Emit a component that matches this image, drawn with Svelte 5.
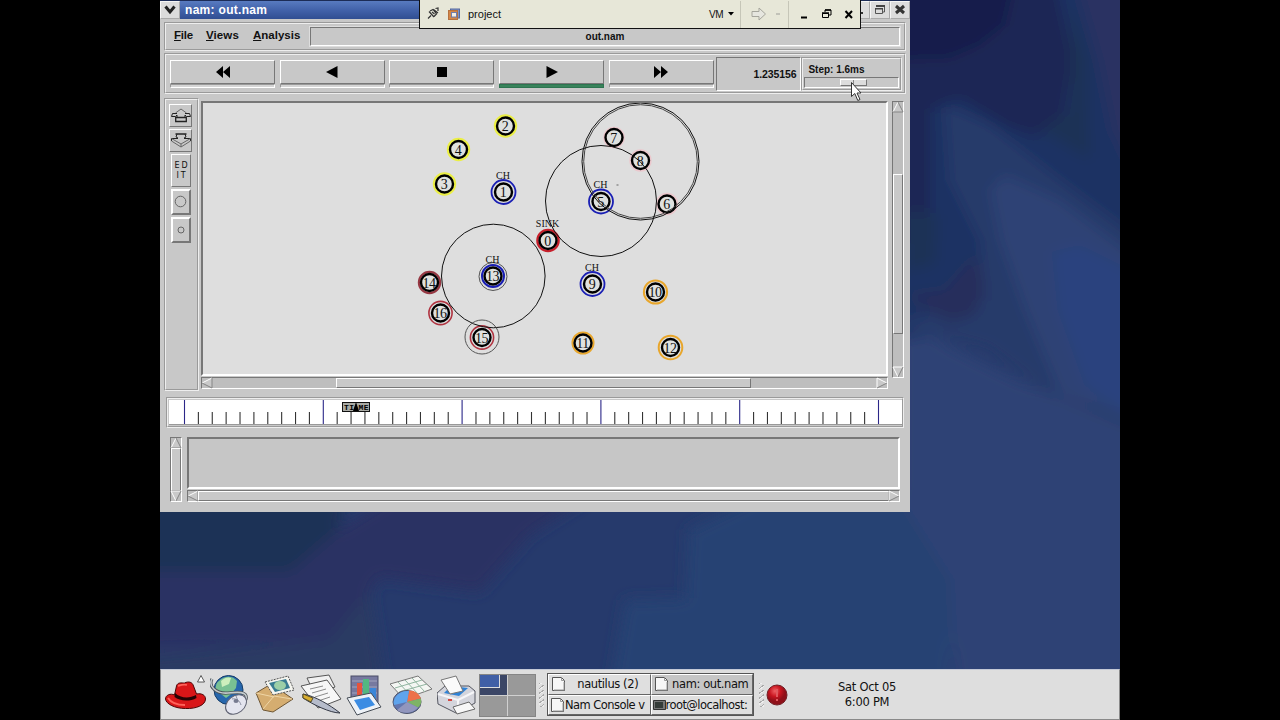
<script lang="ts">
  interface SimNode {
    id: number;
    x: number;
    y: number;
    color: string;
    ring: number;
    width: number;
    label?: string;
  }

  // canvas coordinates are desktop pixels
  const nodes: SimNode[] = [
    { id: 2, x: 505.5, y: 126, color: '#ebef45', ring: 10.5, width: 2.4 },
    { id: 4, x: 458.5, y: 149.5, color: '#ebef45', ring: 10.5, width: 2.4 },
    { id: 3, x: 444.5, y: 184, color: '#ebef45', ring: 10.5, width: 2.4 },
    { id: 1, x: 503.5, y: 192, color: '#1a1fb4', ring: 12, width: 1.8, label: 'CH' },
    { id: 5, x: 601, y: 201.5, color: '#1a1fb4', ring: 12, width: 1.8, label: 'CH' },
    { id: 7, x: 614, y: 137.5, color: '#ebc8cd', ring: 9.8, width: 2 },
    { id: 8, x: 640.5, y: 160.5, color: '#ebc8cd', ring: 10.2, width: 2 },
    { id: 6, x: 667, y: 204, color: '#ebc8cd', ring: 10.2, width: 2 },
    { id: 0, x: 548, y: 240.5, color: '#c7202c', ring: 10.6, width: 2.4 , label: 'SINK' },
    { id: 13, x: 493, y: 276, color: '#1a1fb4', ring: 11, width: 2, label: 'CH' },
    { id: 9, x: 592.5, y: 284, color: '#1a1fb4', ring: 12, width: 1.8, label: 'CH' },
    { id: 14, x: 429.5, y: 282.5, color: '#963843', ring: 10.6, width: 2.2 },
    { id: 16, x: 440.5, y: 313, color: '#b03340', ring: 11.6, width: 1.6 },
    { id: 15, x: 482, y: 337.5, color: '#b03340', ring: 11.6, width: 1.6 },
    { id: 10, x: 655.5, y: 292, color: '#e8a62b', ring: 11.6, width: 2 },
    { id: 11, x: 583, y: 343, color: '#e8a62b', ring: 10.5, width: 2 },
    { id: 12, x: 670.5, y: 347.5, color: '#e8a62b', ring: 11.8, width: 2 }
  ];

  const waves = [
    { x: 640.5, y: 161.5, r: 58.5, color: '#111' },
    { x: 640.5, y: 161.5, r: 56.8, color: '#444' },
    { x: 601, y: 201, r: 55.5, color: '#111' },
    { x: 493.3, y: 276, r: 51.8, color: '#111' },
    { x: 493, y: 276.5, r: 14, color: '#555' },
    { x: 482, y: 337, r: 17, color: '#555' }
  ];

  const controls = [
    { name: 'rewind', path: 'M7 0v12L0 6zM14 0v12L7 6z', running: false },
    { name: 'backward', path: 'M12.500 0v12L1 6z', running: false },
    { name: 'stop', path: 'M2 1h10v10H2z', running: false },
    { name: 'play', path: 'M1.500 0v12L13 6z', running: true },
    { name: 'forward', path: 'M0 0v12L7 6zM7 0v12L14 6z', running: false }
  ];

  const ticks = Array.from({ length: 51 }, (_, i) => ({
    x: 15.5 + i * 13.88,
    major: i % 10 === 0
  }));

  const tasks = [
    { title: 'nautilus (2)', icon: 'page', active: false },
    { title: 'nam: out.nam', icon: 'page', active: true },
    { title: 'Nam Console v', icon: 'page', active: false },
    { title: 'root@localhost:', icon: 'term', active: false }
  ];

  // wallpaper patches, painted back to front
  const patches = [
    { fill: '#1e3056', points: '140,490 350,490 335,540 290,575 140,590' },
    { fill: '#2a3263', points: '140,572 290,572 345,525 400,490 600,490 530,535 480,592 380,578 340,640 140,650' },
    { fill: '#293a63', points: '140,655 330,640 370,590 385,690 140,690' },
    { fill: '#254273', points: '610,690 625,600 685,598 688,530 770,490 960,490 950,690' },
    { fill: '#2f4274', points: '900,320 1040,390 1140,420 1140,690 955,690 950,580 900,500' },
    { fill: '#1c3263', points: '890,-20 1140,-20 1140,260 1040,190 990,180 990,330 890,340' },
    { fill: '#1c2655', points: '890,-20 1055,-20 1072,60 1062,122 1035,136 1005,126 960,98 930,110 930,230 890,250' },
    { fill: '#141f4b', points: '890,-20 1015,-20 1005,25 980,45 950,58 890,60' },
    { fill: '#2a3062', points: '1075,-20 1140,-20 1140,190 1112,130 1098,60' },
    { fill: '#1f3157', points: '1040,130 1070,110 1070,0 1088,60 1090,160' },
    { fill: '#273a6b', points: '945,105 990,125 1060,180 1140,240 1140,430 1040,390 985,350 890,325 985,300 980,240 950,180' },
    { fill: '#282e5c', points: '905,295 945,290 975,255 985,285 975,315 950,322' },
    { fill: '#1e3156', points: '905,210 938,215 935,265 905,272' },
    { fill: '#2d4275', points: '990,190 1005,175 1060,200 1140,260 1140,420 1060,395 1025,310 1000,240' },
    { fill: '#2c437e', points: '1052,252 1080,245 1140,275 1140,425 1085,385 1058,310' }
  ];
</script>

{#snippet arrow(dir: string)}
  <svg class="arrow" width="12" height="12" viewBox="0 0 12 12">
    {#if dir === 'up'}
      <path d="M6 1L11 11H1z" fill="#c9c9c9" />
      <path d="M1 11L6 1" stroke="#fff" /><path d="M6 1l5 10H1" fill="none" stroke="#858585" />
    {:else if dir === 'down'}
      <path d="M1 1h10L6 11z" fill="#c9c9c9" />
      <path d="M11 1H1l5 10" fill="none" stroke="#fff" /><path d="M6 11l5-10" stroke="#858585" />
    {:else if dir === 'left'}
      <path d="M11 1v10L1 6z" fill="#c9c9c9" />
      <path d="M11 1L1 6" stroke="#fff" /><path d="M1 6l10 5V1" fill="none" stroke="#858585" />
    {:else}
      <path d="M1 1v10l10-5z" fill="#c9c9c9" />
      <path d="M1 11V1l10 5" fill="none" stroke="#fff" /><path d="M1 11l10-5" stroke="#858585" />
    {/if}
  </svg>
{/snippet}

<div class="screen">
  <div class="desktop">
    <svg class="wallpaper" width="960" height="720" viewBox="160 0 960 720">
      <defs><filter id="soft" x="-20%" y="-20%" width="140%" height="140%"><feGaussianBlur stdDeviation="7" /></filter></defs>
      <g filter="url(#soft)">
        {#each patches as p}
          <polygon points={p.points} fill={p.fill} />
        {/each}
      </g>
    </svg>

    <main class="window">
      <header class="titlebar">
        <span class="wm-menu">
          <svg width="12" height="10" viewBox="0 0 12 10"><path d="M1.500 1.500L6 7l4.500-5.500" fill="none" stroke="#222" stroke-width="3" /></svg>
        </span>
        <span class="title">nam: out.nam</span>
        <span class="wm-button">
          <svg width="12" height="12" viewBox="0 0 12 12"><path d="M1 8h8v2H1z" fill="#333" /></svg>
        </span>
        <span class="wm-button">
          <svg width="12" height="12" viewBox="0 0 12 12"><path d="M2.500 2h8v6h-2M1.500 4.500h7v5h-7z" fill="none" stroke="#555" /><path d="M2 1h9v2H2zM1 4h8v1.500H1z" fill="#444" /></svg>
        </span>
        <span class="wm-button">
          <svg width="12" height="12" viewBox="0 0 12 12"><path d="M2 2l8 7M10 2L2 9" stroke="#333" stroke-width="3" /></svg>
        </span>
      </header>

      <nav class="menubar">
        <span class="menu file"><u>F</u>ile</span>
        <span class="menu views"><u>V</u>iews</span>
        <span class="menu analysis"><u>A</u>nalysis</span>
        <span class="filename">out.nam</span>
      </nav>

      <section class="controls">
        {#each controls as c (c.name)}
          <div class="control" class:running={c.running}>
            <button type="button" aria-label={c.name}>
              <svg width="14" height="12" viewBox="0 0 14 12"><path d={c.path} /></svg>
            </button>
            <i></i>
          </div>
        {/each}
        <div class="clock">1.235156</div>
        <div class="step">
          <span>Step: 1.6ms</span>
          <div class="slider"><b></b></div>
        </div>
      </section>

      <section class="workspace">
        <aside class="tools">
          <span class="tool arrows">
            <svg width="20" height="15" viewBox="0 0 20 15" fill="none" stroke="#222">
              <path d="M4.500 5L10 1l5.500 4" stroke="#666" />
              <path d="M6 5.500H1.500L.500 8.500h4L6 7v2M14 5.500h4.500l1 3h-4L14 7v2" />
              <path d="M4.700 9.500h10.600v4H4.700z" stroke-width="1.300" />
            </svg>
          </span>
          <span class="tool arrows">
            <svg width="20" height="15" viewBox="0 0 20 15" fill="none" stroke="#222">
              <path d="M4.500 1h11" stroke-width="1.500" />
              <path d="M6 1l-1 3 2 1M14 1l1 3-2 1M7 5.500H.500V8M13 5.500h6.500V8" />
              <path d="M.500 8L10 14l9.500-6M.500 5.500L10 11l9.500-5.500M10 11v3" stroke="#666" />
            </svg>
          </span>
          <span class="tool edit">ED<br />IT</span>
          <span class="tool zoom"><svg width="14" height="14" viewBox="0 0 14 14"><circle cx="6.500" cy="6.500" r="5.300" fill="none" stroke="#666" /></svg></span>
          <span class="tool zoom"><svg width="14" height="14" viewBox="0 0 14 14"><circle cx="7" cy="7" r="3" fill="none" stroke="#666" /></svg></span>
        </aside>

        <div class="view">
          <div class="canvas">
            <svg width="683" height="271" viewBox="203 103 683 271">
              {#each nodes as n (n.id)}
                <circle cx={n.x} cy={n.y} r={n.ring} fill="none" stroke={n.color} stroke-width={n.width} />
                <circle cx={n.x} cy={n.y} r="8.500" fill="#dfe1df" stroke="#000" stroke-width="2.400" />
              {/each}
              {#each waves as w}
                <circle cx={w.x} cy={w.y} r={w.r} fill="none" stroke={w.color} stroke-width="1" />
              {/each}
              {#each nodes as n (n.id)}
                <text class="id" x={n.x - 0.5} y={n.y + 5}>{n.id}</text>
                {#if n.label}
                  <text class="tag" x={n.x - 0.5} y={n.y - 13.5}>{n.label}</text>
                {/if}
              {/each}
              <path d="M616.500 185h2" stroke="#666" />
            </svg>
          </div>
          <div class="hscroll">
            {@render arrow('left')}
            <div class="trough"><b class="view-thumb"></b></div>
            {@render arrow('right')}
          </div>
        </div>

        <div class="vscroll view-v">
          {@render arrow('up')}
          <div class="trough"><b></b></div>
          {@render arrow('down')}
        </div>
      </section>

      <section class="timeline">
        <svg width="733" height="25" viewBox="0 0 733 25">
          {#each ticks as t}
            <path d="M{t.x} {t.major ? 0 : 12}V24" stroke={t.major ? '#2b2788' : '#333'} stroke-width="1.100" />
          {/each}
          <path d="M0 24.500h733" stroke="#999" />
          <rect x="173.500" y="2.500" width="27" height="9" fill="#a9aaa4" stroke="#111" />
          <text class="time" x="175" y="10" textLength="10">TI</text>
          <text class="time" x="189.500" y="10" textLength="10">ME</text>
          <path d="M187 2l3 9h-6z" fill="#000" />
        </svg>
      </section>

      <section class="annotations">
        <div class="vscroll">
          {@render arrow('up')}
          <div class="trough"><b></b></div>
          {@render arrow('down')}
        </div>
        <div class="notes">
          <div class="listbox"></div>
          <div class="hscroll">
            {@render arrow('left')}
            <div class="trough"><b></b></div>
            {@render arrow('right')}
          </div>
        </div>
      </section>
    </main>

    <div class="vmbar">
      <svg class="pin" width="14" height="14" viewBox="0 0 14 14" fill="none" stroke="#333">
        <path d="M2 11.500l3-3M3 4.500l5 5.500M4 4l3-1.500L10.500 7 8 9.500M7.500 2.500L12 6M6 5l2.500 2M9.500 1.500L12 1v3" stroke-width="1.200" />
      </svg>
      <svg class="vmlogo" width="14" height="13" viewBox="0 0 14 13">
        <rect x="3.500" y="1" width="9" height="9" fill="#7d94c8" stroke="#56699e" />
        <rect x="1.500" y="2.500" width="9" height="9" fill="#d58645" stroke="#b5713f" />
        <rect x="4.500" y="4.500" width="5" height="4.500" fill="#f5f0e5" stroke="#6d7db0" />
      </svg>
      <span class="vmname">project</span>
      <span class="vmmenu">VM</span>
      <svg class="caret" width="6" height="4" viewBox="0 0 6 4"><path d="M0 0h6L3 3.500z" /></svg>
      <span class="sep"></span>
      <svg class="go" width="16" height="14" viewBox="0 0 16 14"><path d="M1 4.500h7V1l6.500 6L8 13V9.500H1z" fill="#e6e6df" stroke="#a5a59c" /></svg>
      <span class="dot"></span>
      <span class="sep second"></span>
      <svg class="vmwin" width="56" height="12" viewBox="0 0 56 12">
        <path d="M1 9.500h6" stroke="#000" stroke-width="2" />
        <path d="M25 4V2h6v5h-2M22.500 5.500h6v4h-6z" fill="none" stroke="#000" />
        <path d="M25 2h6M22 5h7" stroke="#000" stroke-width="1.500" />
        <path d="M45.500 3l6.500 7M52 3l-6.500 7" stroke="#000" stroke-width="2" />
      </svg>
    </div>

    <svg class="pointer" width="12" height="20" viewBox="0 0 12 20"><path d="M.500.500v14l3.300-3 3 7 2.200-1-3-6.500H10z" fill="#fff" stroke="#333" /></svg>

    <footer class="panel">
      <div class="launchers">
        <svg class="hat" width="48" height="44" viewBox="0 0 48 44">
          <path d="M4.500 26c0-4 5-6 9-4l2-9c1-4 5-3 8-3 4-2 8-1 9 3l3 8c5-1 9 1 9 5 0 6-9 10-20 9.500C14 35.500 5 31 4.500 26z" fill="#d91618" stroke="#4c0708" />
          <path d="M14 20c5 5 14 6 21 2l.500 3c-7 4-17 3-22-1z" fill="#260405" />
          <path d="M17 13c3-1 5-2 9-1M7 25c3 5 10 7 17 7" fill="none" stroke="#ff6259" stroke-width="1.800" />
          <path d="M36.500 9h7L40 2.500z" fill="#fff" stroke="#333" stroke-width=".800" />
        </svg>
        <svg class="globe" width="44" height="44" viewBox="0 0 44 44">
          <circle cx="18.500" cy="17" r="14.500" fill="#2767ad" stroke="#173d67" />
          <path d="M9 8c6-6 14-5 18 0l-1 7-6 7-4 3-5-4-5-2c-1-5 0-9 3-11z" fill="#79c193" />
          <path d="M11 8c4-4 8-4 10-3l-2 6-7 3z" fill="#cdefbd" />
          <path d="M2 6c-4 7 4 15 16 14 9-1 20-2 18 6-1 3-3 4-5 4" fill="none" stroke="#4c5358" stroke-width="3.200" />
          <path d="M2 6c-4 7 4 15 16 14 9-1 20-2 18 6-1 3-3 4-5 4" fill="none" stroke="#c4cbce" stroke-width="1.600" />
          <ellipse cx="26" cy="31.500" rx="11.500" ry="8.500" transform="rotate(-38 26 31.500)" fill="#e4e5ef" stroke="#606373" />
          <path d="M22 26c4-1 8 2 9 6M26 23l2 5" fill="none" stroke="#8b8fa1" />
          <ellipse cx="26" cy="28" rx="2.500" ry="2" fill="#777b90" />
        </svg>
        <svg class="mail" width="44" height="44" viewBox="0 0 44 44">
          <path d="M1 20l15-9 22 15-20 13-10-2z" fill="#d5ad70" stroke="#6f5735" />
          <path d="M8 36l11-13 18 3M1 20l18 4" fill="none" stroke="#efd6a6" />
          <path d="M10 9l23-6 6 14-21 5z" fill="#f5f5ef" stroke="#555" stroke-dasharray="2 1" />
          <path d="M14 10l17-4 4 9-15 4z" fill="#397b91" />
          <ellipse cx="25" cy="12.500" rx="6" ry="4.500" fill="#9ccfa7" />
        </svg>
        <svg class="writer" width="44" height="44" viewBox="0 0 44 44">
          <path d="M7 5l22-3 6 12-20 8z" fill="#f1f1f1" stroke="#555" />
          <path d="M1 13l26-6 14 19-23 9z" fill="#f7f7f7" stroke="#555" />
          <path d="M10 16l13-3M12 20l14-4M15 24l13-4M18 28l12-4" stroke="#8c8c8c" />
          <path d="M3 21c12 2 27 11 37 19-10 0-28-9-37-15z" fill="#b6bccb" stroke="#333845" />
          <path d="M3 21l10 4-2 4-8-4z" fill="#d8ae30" stroke="#554a24" />
        </svg>
        <svg class="impress" width="44" height="44" viewBox="0 0 44 44">
          <rect x="6" y="3" width="27" height="26" fill="#77799f" stroke="#4b4d67" />
          <path d="M7 8h25M7 14h25M7 20h25" stroke="#a3a4bd" />
          <path d="M12 10h5v13h-5z" fill="#e7533b" /><path d="M18 6h6v18h-6z" fill="#52b781" /><path d="M25 15h6v12h-6z" fill="#3b86d8" />
          <path d="M2 25l24-5 10 14-24 8z" fill="#eef2f7" stroke="#454c55" />
          <path d="M9 27l15-3 6 8-15 5z" fill="#3b8ce3" />
        </svg>
        <svg class="calc" width="46" height="44" viewBox="0 0 46 44">
          <path d="M0 11l28-8 14 13-28 10z" fill="#f4f6f3" stroke="#777" />
          <path d="M5 15l27-8M9 19l28-8M8 9l13 14M15 7l13 14M22 5l13 14" stroke="#91b5a0" />
          <ellipse cx="17" cy="29" rx="14" ry="11.500" fill="#6376af" stroke="#4d5266" />
          <path d="M17 29L19 17.500c6 0 10 3 12 8z" fill="#ec7149" /><path d="M17 29l14-3.500c1 5-1 7-3 9z" fill="#7eb366" />
          <path d="M17 29l11 5.500C23 41 12 41 7 37z" fill="#9296bd" />
          <path d="M17 29L19 18C8 17 2 26 4 32z" fill="#5fa4ec" />
        </svg>
        <svg class="printer" width="42" height="44" viewBox="0 0 42 44">
          <path d="M0 20l8-7h24l6 5v12l-19 10L1 31z" fill="#d4d5dc" stroke="#555761" />
          <path d="M7 20l7-7 17 2-9 8z" fill="#2f83d7" />
          <path d="M4 7l15-4 7 15-13 3z" fill="#fafafa" stroke="#777" />
          <path d="M1 21l20 6v11M21 27l16-8" fill="none" stroke="#f6f6f8" stroke-width="2" />
          <path d="M16 34l16-5 6 7-18 5z" fill="#f7f7f7" stroke="#666" /><path d="M11 27h4" stroke="#d54942" stroke-width="2" />
        </svg>
      </div>
      <div class="pager"><span class="current"><b></b></span><span></span><span></span><span></span></div>
      <div class="grip"></div>
      <div class="tasks">
        {#each tasks as task (task.title)}
          <div class="task" class:active={task.active} class:tight={task.title.length > 12}>
            {#if task.icon === 'page'}
              <svg width="15" height="16" viewBox="0 0 15 16"><path d="M1.500 1.500h9l3 3v10h-12z" fill="#f7f7f7" stroke="#555" /><path d="M10.500 1.500v3h3M3 14h10V6" fill="none" stroke="#999" /></svg>
            {:else}
              <svg width="13" height="16" viewBox="0 0 13 16"><path d="M.500 3.500h12v9H.500z" fill="#777" stroke="#333" /><path d="M2 5h8v6H2z" fill="#353b38" /></svg>
            {/if}
            <span>{task.title}</span>
          </div>
        {/each}
      </div>
      <div class="grip last"></div>
      <svg class="alert" width="22" height="22" viewBox="0 0 22 22">
        <defs><radialGradient id="ball" cx=".4" cy=".3"><stop offset="0" stop-color="#ef6063" /><stop offset=".55" stop-color="#c91620" /><stop offset="1" stop-color="#8f1019" /></radialGradient></defs>
        <circle cx="11" cy="11" r="10" fill="url(#ball)" stroke="#722026" />
        <path d="M11 5v8M11 15v2" stroke="#e0585d" stroke-width="2" />
      </svg>
      <div class="date">Sat Oct 05<br />6:00 PM</div>
    </footer>
  </div>
</div>

<style>
  :global(body) {
    margin: 0;
    background: #000;
  }
  .screen {
    width: 1280px;
    height: 720px;
    display: flex;
    justify-content: center;
    overflow: hidden;
    background: #000;
    font-family: 'Liberation Sans', Arial, sans-serif;
    color: #111;
  }
  .screen * {
    box-sizing: border-box;
  }
  svg {
    display: block;
    flex: none;
  }
  .desktop {
    position: relative;
    width: 960px;
    height: 720px;
    display: flex;
    flex-direction: column;
    justify-content: space-between;
    align-items: flex-start;
    background: #263a6c;
    isolation: isolate;
  }
  .wallpaper {
    position: absolute;
    inset: 0;
    z-index: -1;
  }
  .window {
    width: 750px;
    height: 512px;
    background: #c8c8c8;
    display: flex;
    flex-direction: column;
  }
  .titlebar {
    height: 19px;
    flex: none;
    display: flex;
    background: linear-gradient(#587bc0, #4262aa 50%, #304e92);
    border-top: 1px solid #1c2c57;
  }
  .wm-menu,
  .wm-button {
    width: 20px;
    display: flex;
    align-items: center;
    justify-content: center;
    background: #dcdcdc;
    border: 1px solid;
    border-color: #f5f5f5 #aaa #aaa #f5f5f5;
  }
  .title {
    flex: 1;
    padding-left: 5px;
    color: #fff;
    font: bold 12px/18px 'Liberation Sans', Arial, sans-serif;
    letter-spacing: 0.3px;
  }
  .menubar {
    height: 29px;
    flex: none;
    margin: 3px 4px 0;
    padding: 2px 4px 4px 8px;
    display: flex;
    border: 2px groove #eee;
    font: bold 11.5px/19px 'Liberation Sans', Arial, sans-serif;
  }
  .file {
    width: 32px;
    letter-spacing: -0.2px;
  }
  .views {
    width: 47px;
    letter-spacing: 0.1px;
  }
  .analysis {
    width: 57px;
  }
  .filename {
    flex: 1;
    height: 19px;
    margin-top: 1px;
    border: 1px solid;
    border-color: #777 #fff #fff #777;
    outline: 1px solid #ddd;
    text-align: center;
    font-size: 10px;
    line-height: 17px;
  }
  .controls {
    height: 41px;
    flex: none;
    margin: 2px 4px 0;
    padding: 2px 2px 1px 4px;
    display: flex;
    border: 2px groove #eee;
  }
  .control {
    width: 105px;
    height: 28px;
    margin: 3px 4.700px 0 0;
    display: flex;
    flex-direction: column;
    flex: none;
  }
  .control button {
    height: 24px;
    padding: 0;
    display: flex;
    align-items: center;
    justify-content: center;
    background: #c8c8c8;
    border: 1px solid;
    border-color: #fff #777 #777 #fff;
  }
  .control i {
    height: 4px;
    border: 1px solid;
    border-color: #999 #fff #fff #999;
    background: #d5d5d5;
  }
  .running i {
    background: #39835b;
    border-color: #2d7450;
  }
  .clock {
    width: 85px;
    flex: none;
    height: 34px;
    margin-left: -2px;
    padding-right: 4px;
    border: 1px solid;
    border-color: #777 #fff #fff #777;
    text-align: right;
    font: bold 10.5px/33px 'Liberation Sans', Arial, sans-serif;
    letter-spacing: -0.1px;
  }
  .step {
    flex: 1;
    height: 34px;
    padding: 4px 1px 0 1px;
    border: 2px groove #eee;
    font: bold 10px/13px 'Liberation Sans', Arial, sans-serif;
  }
  .step span {
    display: block;
    padding-left: 4px;
  }
  .slider {
    height: 11px;
    margin-top: 1px;
    padding: 1px 0 0 35px;
    border: 1px solid;
    border-color: #777 #fff #fff #777;
  }
  .slider b {
    display: block;
    width: 27px;
    height: 7px;
    background: linear-gradient(90deg, #ddd 48%, #888 48% 52%, #ddd 52%);
    border: 1px solid;
    border-color: #fff #777 #777 #fff;
  }
  .workspace {
    height: 293px;
    flex: none;
    display: flex;
    margin: 4px 5px 0 4px;
  }
  .tools {
    width: 35px;
    padding: 4px 0 0 4px;
    border: 2px groove #eee;
    display: flex;
    flex-direction: column;
    align-items: flex-start;
  }
  .tool {
    display: flex;
    align-items: center;
    justify-content: center;
    border: 1px solid;
    border-color: #fff #777 #777 #fff;
    margin-bottom: 2px;
  }
  .arrows {
    width: 23px;
    height: 23px;
    margin-left: -1px;
  }
  .edit {
    width: 20px;
    height: 33px;
    padding-left: 2px;
    font: 8px/10px 'DejaVu Sans', sans-serif;
    letter-spacing: 2px;
    text-align: center;
    margin-left: 1px;
  }
  .zoom {
    width: 20px;
    height: 26px;
    margin-left: 1px;
    border-width: 2px;
  }
  .view {
    width: 687px;
    margin: 3px 0 0 2px;
    display: flex;
    flex-direction: column;
  }
  .canvas {
    height: 275px;
    background: #dedede;
    border: 2px solid;
    border-color: #777 #fff #fff #777;
  }
  .id {
    font: 14px 'Liberation Serif', serif;
    letter-spacing: -0.4px;
    text-anchor: middle;
    fill: #111;
  }
  .tag {
    font: 10px 'Liberation Serif', serif;
    text-anchor: middle;
    fill: #111;
  }
  .hscroll,
  .vscroll {
    display: flex;
    background: #bebebe;
    border: 1px solid;
    border-color: #777 #fff #fff #777;
  }
  .hscroll {
    height: 12px;
    margin-top: 1px;
    align-items: center;
  }
  .vscroll {
    width: 12px;
    flex-direction: column;
    align-items: center;
  }
  .arrow {
    margin: -1px;
  }
  .trough {
    flex: 1;
    display: flex;
    align-self: stretch;
  }
  .trough b {
    flex: 1;
    background: #c9c9c9;
    border: 1px solid;
    border-color: #fff #777 #777 #fff;
  }
  .trough .view-thumb {
    flex: none;
    width: 415px;
    margin-left: 124px;
  }
  .view-v {
    height: 277px;
    margin: 3px 0 0 4px;
  }
  .view-v .trough {
    padding: 62px 0 33px;
  }
  .timeline {
    width: 738px;
    height: 31px;
    flex: none;
    margin: 6px 0 0 6px;
    padding: 1px 0 0 1px;
    border: 2px groove #eee;
    overflow: hidden;
  }
  .timeline svg {
    background: #fff;
  }
  .time {
    font: bold 8px 'Liberation Mono', monospace;
  }
  .annotations {
    height: 65px;
    margin: 9px 10px 0;
    display: flex;
  }
  .notes {
    flex: 1;
    margin-left: 5px;
    display: flex;
    flex-direction: column;
  }
  .listbox {
    height: 52px;
    background: #c6c6c6;
    border: 2px solid;
    border-color: #777 #fff #fff #777;
  }
  .vmbar {
    position: absolute;
    left: 259px;
    top: 0;
    width: 442px;
    height: 29px;
    display: flex;
    align-items: center;
    background: #e7e7d8;
    border: 1px solid #111;
    border-top: 0;
    font: 11px 'Liberation Sans', Arial, sans-serif;
  }
  .pin {
    margin-left: 6px;
  }
  .vmlogo {
    margin-left: 7px;
  }
  .vmname {
    margin-left: 7px;
    width: 241px;
  }
  .vmmenu {
    width: 19px;
    font-size: 10px;
    letter-spacing: -0.4px;
  }
  .sep {
    width: 1px;
    height: 27px;
    margin-left: 6px;
    background: #c6c6b8;
  }
  .go {
    margin-left: 10px;
  }
  .dot {
    width: 4px;
    height: 2px;
    margin-left: 9px;
    background: #c2c2b8;
  }
  .second {
    margin-left: 8px;
  }
  .vmwin {
    margin-left: 11px;
  }
  .pointer {
    position: absolute;
    left: 691px;
    top: 82px;
  }
  .panel {
    width: 960px;
    height: 51px;
    display: flex;
    align-items: flex-start;
    background: #dedede;
    border: 1px solid #898989;
    border-top-color: #c4c9d6;
  }
  .launchers {
    display: flex;
    gap: 1px;
    margin-top: 3px;
    width: 318px;
  }
  .pager {
    width: 57px;
    height: 43px;
    margin-top: 4px;
    display: grid;
    grid-template-columns: 1fr 1fr;
    grid-template-rows: 1fr 1fr;
    gap: 1px;
    background: #d0d0d0;
    border: 1px solid #858585;
  }
  .pager span {
    background: #999;
  }
  .pager .current {
    background: #3b4666;
  }
  .current b {
    display: block;
    width: 20px;
    height: 13px;
    background: #405fa6;
    border: 1px solid #ddd;
    border-width: 0 1px 1px 0;
  }
  .grip {
    width: 5px;
    height: 24px;
    margin: 13px 3px 0 3px;
    background: repeating-linear-gradient(145deg, #aaa 0 1px, #eee 1px 2px, #dedede 2px 4px);
  }
  .tasks {
    width: 207px;
    height: 43px;
    margin-top: 3px;
    display: grid;
    grid-template-columns: 1fr 1fr;
    grid-template-rows: 1fr 1fr;
    border: 1px solid #555;
  }
  .task {
    min-width: 0;
    display: flex;
    align-items: center;
    padding-left: 2px;
    white-space: nowrap;
    background: #dfdfdf;
    border: 1px solid;
    border-color: #fff #666 #666 #fff;
    font: 11.5px 'DejaVu Sans', sans-serif;
  }
  .task span {
    flex: 1;
    letter-spacing: -0.4px;
    text-align: center;
  }
  .task.tight {
    padding-left: 1px;
  }
  .task.tight span {
    letter-spacing: -0.55px;
    text-align: left;
  }
  .task.active {
    background: #c6c6c6;
  }
  .last {
    margin-left: 5px;
  }
  .alert {
    margin: 14px 0 0 -1px;
  }
  .date {
    margin: 10px 0 0 38px;
    width: 82px;
    text-align: center;
    font: 11.5px/15px 'DejaVu Sans', sans-serif;
    letter-spacing: -0.25px;
  }
</style>
